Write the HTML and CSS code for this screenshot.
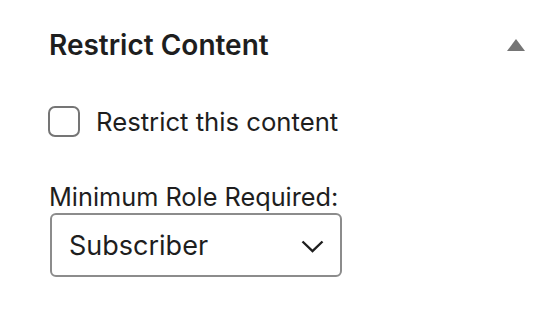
FILE: index.html
```html
<!DOCTYPE html>
<html>
<head>
<meta charset="utf-8">
<link rel="stylesheet" href="styles.css">
</head>
<body>
<div class="panel">
  <div class="panel-header">
    <h2 class="panel-title">Restrict Content</h2>
    <svg class="toggle" width="18" height="12" viewBox="0 0 18 12"><polygon points="9,0 18,12 0,12" fill="#757575"/></svg>
  </div>
  <label class="check-row">
    <span class="checkbox"></span>
    <span class="check-label">Restrict this content</span>
  </label>
  <div class="field">
    <div class="field-label">Minimum Role Required:</div>
    <div class="select">
      <span class="select-value">Subscriber</span>
      <svg class="chevron" width="23" height="13" viewBox="0 0 23 13"><polyline points="1.5,1.5 11.5,11 21.5,1.5" fill="none" stroke="#1e1e1e" stroke-width="2.4"/></svg>
    </div>
  </div>
</div>
</body>
</html>
```
FILE: styles.css
```css
html, body {
  margin: 0;
  background: #ffffff;
}
body {
  font-family: Inter, "Noto Sans", sans-serif;
  color: #1e1e1e;
}
.panel {
  width: 560px;
  height: 322px;
  box-sizing: border-box;
  padding: 28px 0 0 49px;
}
.panel-header {
  display: flex;
  align-items: center;
  justify-content: space-between;
  padding-right: 35px;
  height: 34px;
}
.panel-title {
  margin: 0;
  font-size: 28px;
  font-weight: 600;
  letter-spacing: 0;
}
.toggle {
  display: block;
}
.check-row {
  display: flex;
  align-items: center;
  gap: 16px;
  margin-top: 44px;
}
.checkbox {
  width: 28px;
  height: 27px;
  border: 2px solid #757575;
  border-radius: 7px;
  box-sizing: content-box;
  margin-left: -1px;
}
.check-label {
  font-size: 25.7px;
}
.field {
  margin-top: 45px;
}
.field-label {
  font-size: 25.3px;
  line-height: 30px;
}
.select {
  border: 2px solid #8c8c8c;
  border-radius: 6px;
  display: flex;
  align-items: center;
  justify-content: space-between;
  padding: 0 16px 0 17px;
  box-sizing: border-box;
  width: 292px;
  height: 64px;
  margin-left: 1px;
  margin-top: 1px;
}
.select-value {
  font-size: 27px;
}
.chevron {
  display: block;
  margin-top: 2px;
}
```
